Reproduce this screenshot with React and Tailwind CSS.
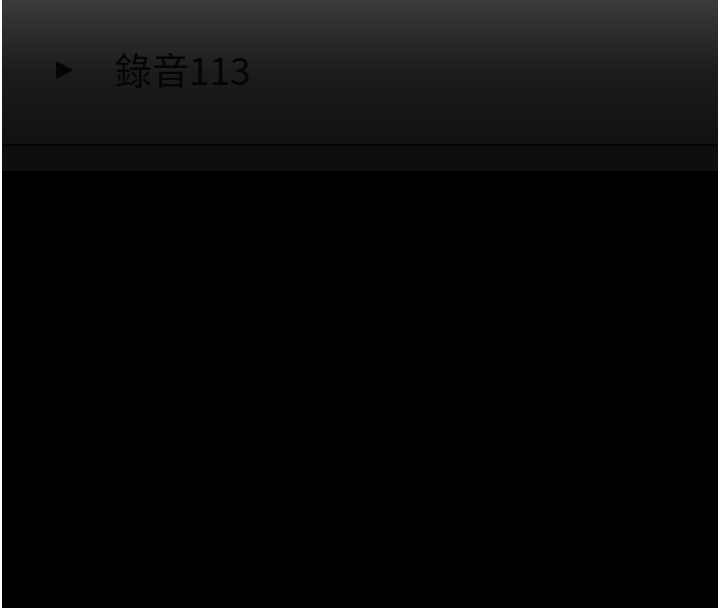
export default function App() {
  return (
    <div className="bg-white h-[608px] px-[2px]">
      <div className="h-full bg-black flex flex-col">
        <div className="h-[144px] bg-gradient-to-b from-[#3b3b3b] via-[#1c1c1c] to-[#111111] flex items-center pl-[54px] pb-[5px]">
          <svg width="17" height="18" viewBox="0 0 17 18" className="shrink-0">
            <polygon points="0,0 17,9 0,18" fill="#050505" />
          </svg>
          <span
            className="ml-[42px] text-[37px] leading-none text-[#050505]"
            style={{ fontFamily: '"Noto Sans CJK TC", "Noto Sans", sans-serif' }}
          >
            錄音113
          </span>
        </div>
        <div className="h-[2px] bg-[#050505]" />
        <div className="h-[25px] bg-[#0e0e0e]" />
        <div className="flex-1 bg-black" />
      </div>
    </div>
  )
}
